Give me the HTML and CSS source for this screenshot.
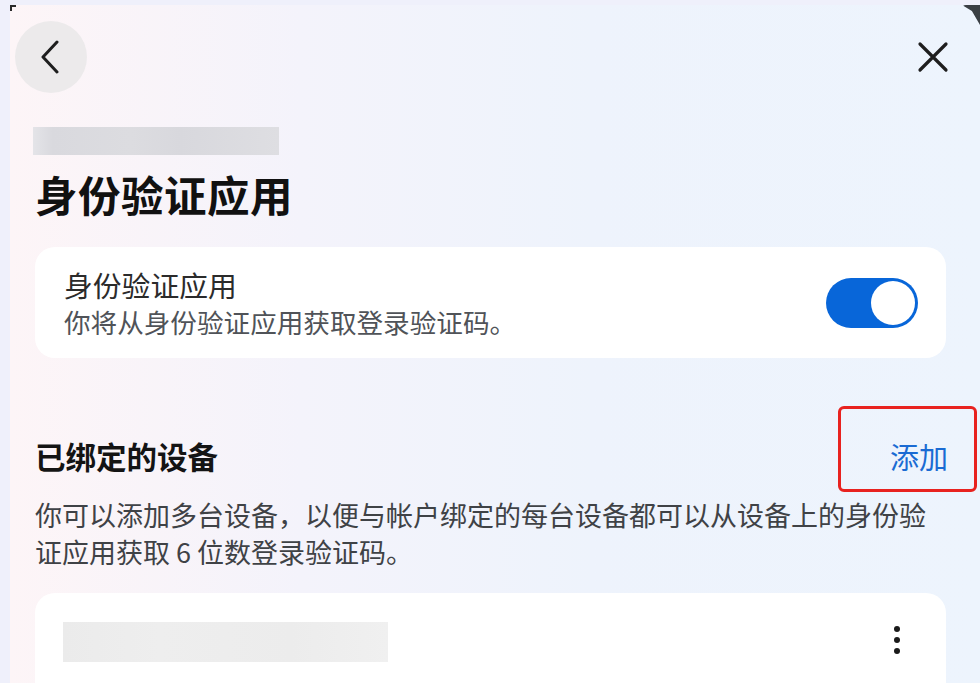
FILE: index.html
```html
<!DOCTYPE html>
<html lang="zh-CN">
<head>
<meta charset="utf-8">
<title>身份验证应用</title>
<link rel="stylesheet" href="styles.css">
</head>
<body>
<div class="screen">
  <div class="panel">
    <span class="corner corner-tl"></span>
    <span class="corner corner-tr"></span>
    <header class="topbar">
      <button class="back" aria-label="返回">
        <svg width="22" height="34" viewBox="0 0 22 34"><path d="M17 2 L3 17 L17 32" fill="none" stroke="#1e1e1e" stroke-width="3" stroke-linecap="round" stroke-linejoin="round"/></svg>
      </button>
      <button class="close" aria-label="关闭">
        <svg width="32" height="32" viewBox="0 0 32 32"><path d="M3 3 L29 29 M29 3 L3 29" fill="none" stroke="#1e1e1e" stroke-width="3.2" stroke-linecap="round"/></svg>
      </button>
    </header>

    <main class="content">
      <div class="blur-label"></div>
      <h1 class="title">身份验证应用</h1>

      <section class="card setting">
        <div class="setting-text">
          <div class="setting-title">身份验证应用</div>
          <div class="setting-sub">你将从身份验证应用获取登录验证码。</div>
        </div>
        <div class="toggle"><span class="knob"></span></div>
      </section>

      <div class="section-head">
        <h2 class="section-title">已绑定的设备</h2>
        <a class="add">添加<span class="highlight"></span></a>
      </div>
      <p class="desc">你可以添加多台设备，以便与帐户绑定的每台设备都可以从设备上的身份验证应用获取 6 位数登录验证码。</p>

      <section class="card device">
        <div class="blur-device"></div>
        <div class="more"><span></span><span></span><span></span></div>
      </section>
    </main>
  </div>
</div>
</body>
</html>
```

FILE: styles.css
```css
* { box-sizing: border-box; }
html, body {
  margin: 0;
  padding: 0;
  height: 683px;
  overflow: hidden;
}
body {
  background: #eff0fb;
  font-family: "Noto Sans CJK SC", "Noto Sans", sans-serif;
  color: #111;
}
.screen {
  padding: 5px 0 0 10px;
  height: 683px;
}
.panel {
  position: relative;
  height: 678px;
  background: linear-gradient(90deg, #fdf5f7 0%, #f4f3fb 30%, #eef3fc 60%, #edf4fd 100%);
  overflow: hidden;
}
.corner {
  position: absolute;
  top: 0;
}
.corner-tl {
  left: 0;
  width: 6px;
  height: 6px;
  border-top: 2px solid #2a2a2a;
  border-left: 2px solid #2a2a2a;
}
.corner-tr {
  right: 0;
  width: 18px;
  height: 20px;
  background: #3a3f44;
  border-top-left-radius: 4px;
  clip-path: polygon(0 0, 100% 0, 100% 100%, 55% 30%);
}
.topbar {
  display: flex;
  justify-content: space-between;
  align-items: center;
  padding: 16px 31px 0 5px;
}
.back {
  width: 72px;
  height: 72px;
  border-radius: 50%;
  border: none;
  background: #eceaeb;
  display: flex;
  align-items: center;
  justify-content: center;
  padding: 0;
}
.close {
  width: 32px;
  height: 32px;
  border: none;
  background: none;
  padding: 0;
  display: flex;
}
.content {
  padding: 0 34px 0 25px;
}
.blur-label {
  margin-top: 34px;
  width: 246px;
  height: 28px;
  margin-left: -2px;
  background: linear-gradient(90deg, #e4e4e8 0%, #d9d9de 8%, #dcdce0 40%, #d8d8dd 60%, #dedee2 100%);
}
.title {
  margin: 14px 0 0;
  font-size: 42.5px;
  line-height: 50px;
  font-weight: 700;
  color: #111;
  letter-spacing: 0.5px;
}
.card {
  background: #fff;
  border-radius: 20px;
}
.setting {
  margin-top: 28px;
  height: 111px;
  display: flex;
  align-items: center;
  justify-content: space-between;
  padding: 0 28px 0 29px;
}
.setting-title {
  font-size: 28.8px;
  line-height: 37px;
  color: #2b2b2b;
}
.setting-sub {
  font-size: 26.6px;
  line-height: 37px;
  color: #505358;
}
.toggle {
  width: 92px;
  height: 50px;
  border-radius: 25px;
  background: #0866d9;
  position: relative;
  display: flex;
  justify-content: flex-end;
  align-items: center;
  padding: 3px;
}
.knob {
  width: 44px;
  height: 44px;
  border-radius: 50%;
  background: #fff;
}
.section-head {
  margin-top: 78px;
  display: flex;
  justify-content: space-between;
  align-items: center;
  height: 40px;
}
.section-title {
  margin: 0;
  font-size: 30.5px;
  line-height: 40px;
  font-weight: 700;
  color: #141414;
}
.add {
  position: relative;
  font-size: 29px;
  line-height: 40px;
  color: #1a6bd3;
  margin-right: -2px;
}
.highlight {
  position: absolute;
  left: -52px;
  right: -29px;
  top: -30px;
  bottom: -16px;
  border: 3px solid #e8221f;
  border-radius: 6px;
}
.desc {
  margin: 20px 0 0;
  font-size: 27px;
  line-height: 37px;
  color: #3f4246;
}
.device {
  margin-top: 23px;
  height: 130px;
  display: flex;
  align-items: flex-start;
  justify-content: space-between;
  padding: 29px 46px 0 28px;
}
.blur-device {
  width: 325px;
  height: 40px;
  background: linear-gradient(90deg, #ebebeb 0%, #eeeeee 30%, #ececec 70%, #f0f0f0 100%);
}
.more {
  display: flex;
  flex-direction: column;
  gap: 5px;
  margin-top: 4px;
}
.more span {
  width: 6px;
  height: 6px;
  border-radius: 50%;
  background: #1a1a1a;
}
```
